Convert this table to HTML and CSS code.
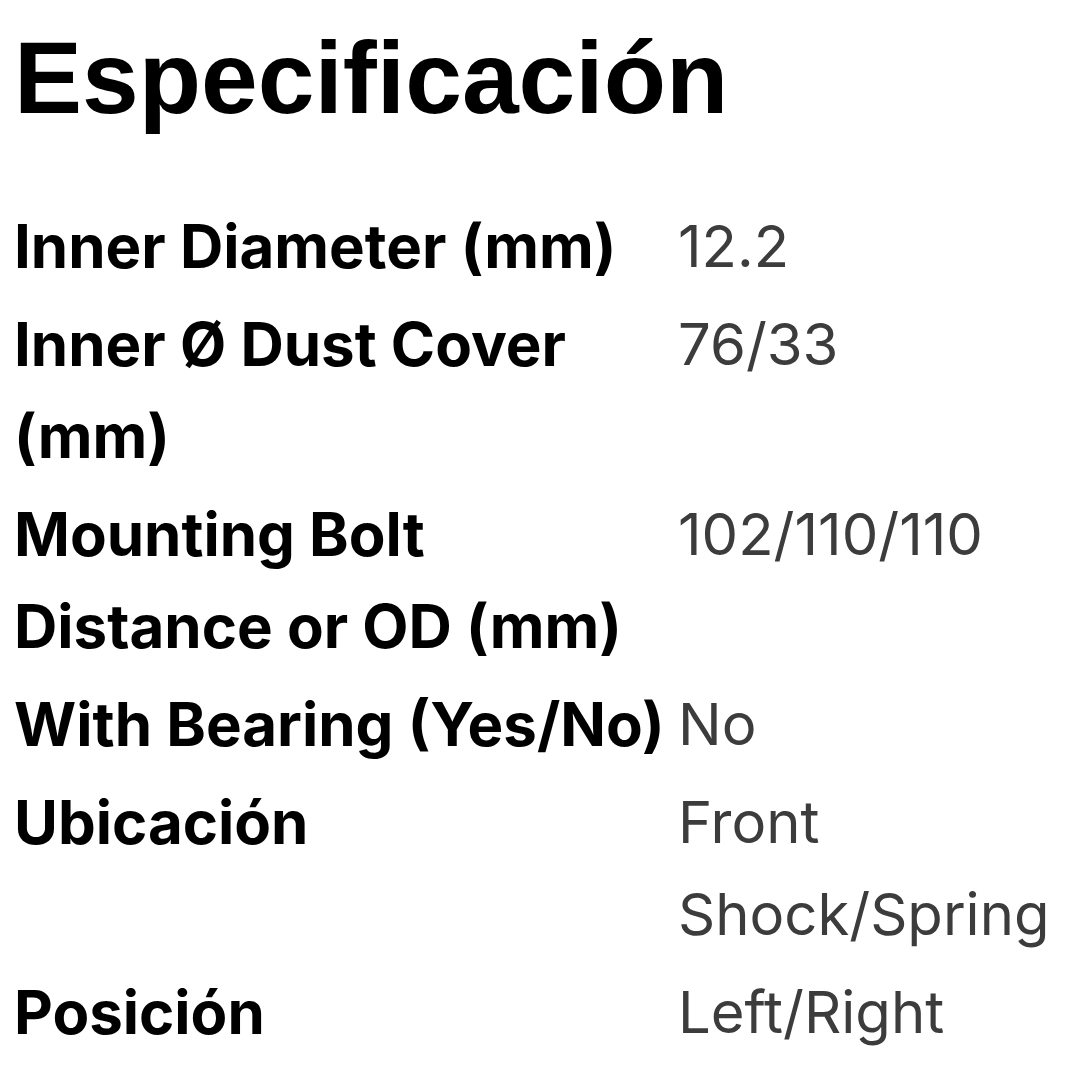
FILE: index.html
```html
<!DOCTYPE html>
<html lang="es">
<head>
<meta charset="utf-8">
<title>Especificación</title>
<link rel="stylesheet" href="styles.css">
</head>
<body>
<section class="spec">
  <h2 class="spec-title">Especificación</h2>
  <div class="spec-table">
    <div class="spec-label">Inner Diameter (mm)</div>
    <div class="spec-value">12.2</div>
    <div class="spec-label">Inner Ø Dust Cover (mm)</div>
    <div class="spec-value">76/33</div>
    <div class="spec-label">Mounting Bolt Distance or OD (mm)</div>
    <div class="spec-value">102/110/110</div>
    <div class="spec-label">With Bearing (Yes/No)</div>
    <div class="spec-value">No</div>
    <div class="spec-label">Ubicación</div>
    <div class="spec-value">Front Shock/Spring</div>
    <div class="spec-label">Posición</div>
    <div class="spec-value">Left/Right</div>
  </div>
</section>
</body>
</html>
```

FILE: styles.css
```css
html, body {
  margin: 0;
  padding: 0;
  background: #ffffff;
}

.spec {
  padding: 0 0 0 14px;
}

.spec-title {
  margin: 0;
  padding-top: 18px;
  font-family: "Liberation Sans", Arial, sans-serif;
  font-weight: 700;
  font-size: 102px;
  line-height: 120px;
  color: #000000;
}

.spec-table {
  display: grid;
  grid-template-columns: 664px 1fr;
  column-gap: 0;
  row-gap: 6px;
  margin-top: 62px;
  line-height: 92px;
}

.spec-label {
  font-family: Inter, "Liberation Sans", sans-serif;
  font-weight: 700;
  font-size: 60px;
  color: #000000;
}

.spec-value {
  font-family: Inter, "Liberation Sans", sans-serif;
  font-weight: 400;
  font-size: 58px;
  color: #3c3c3c;
  padding-right: 20px;
}
```
